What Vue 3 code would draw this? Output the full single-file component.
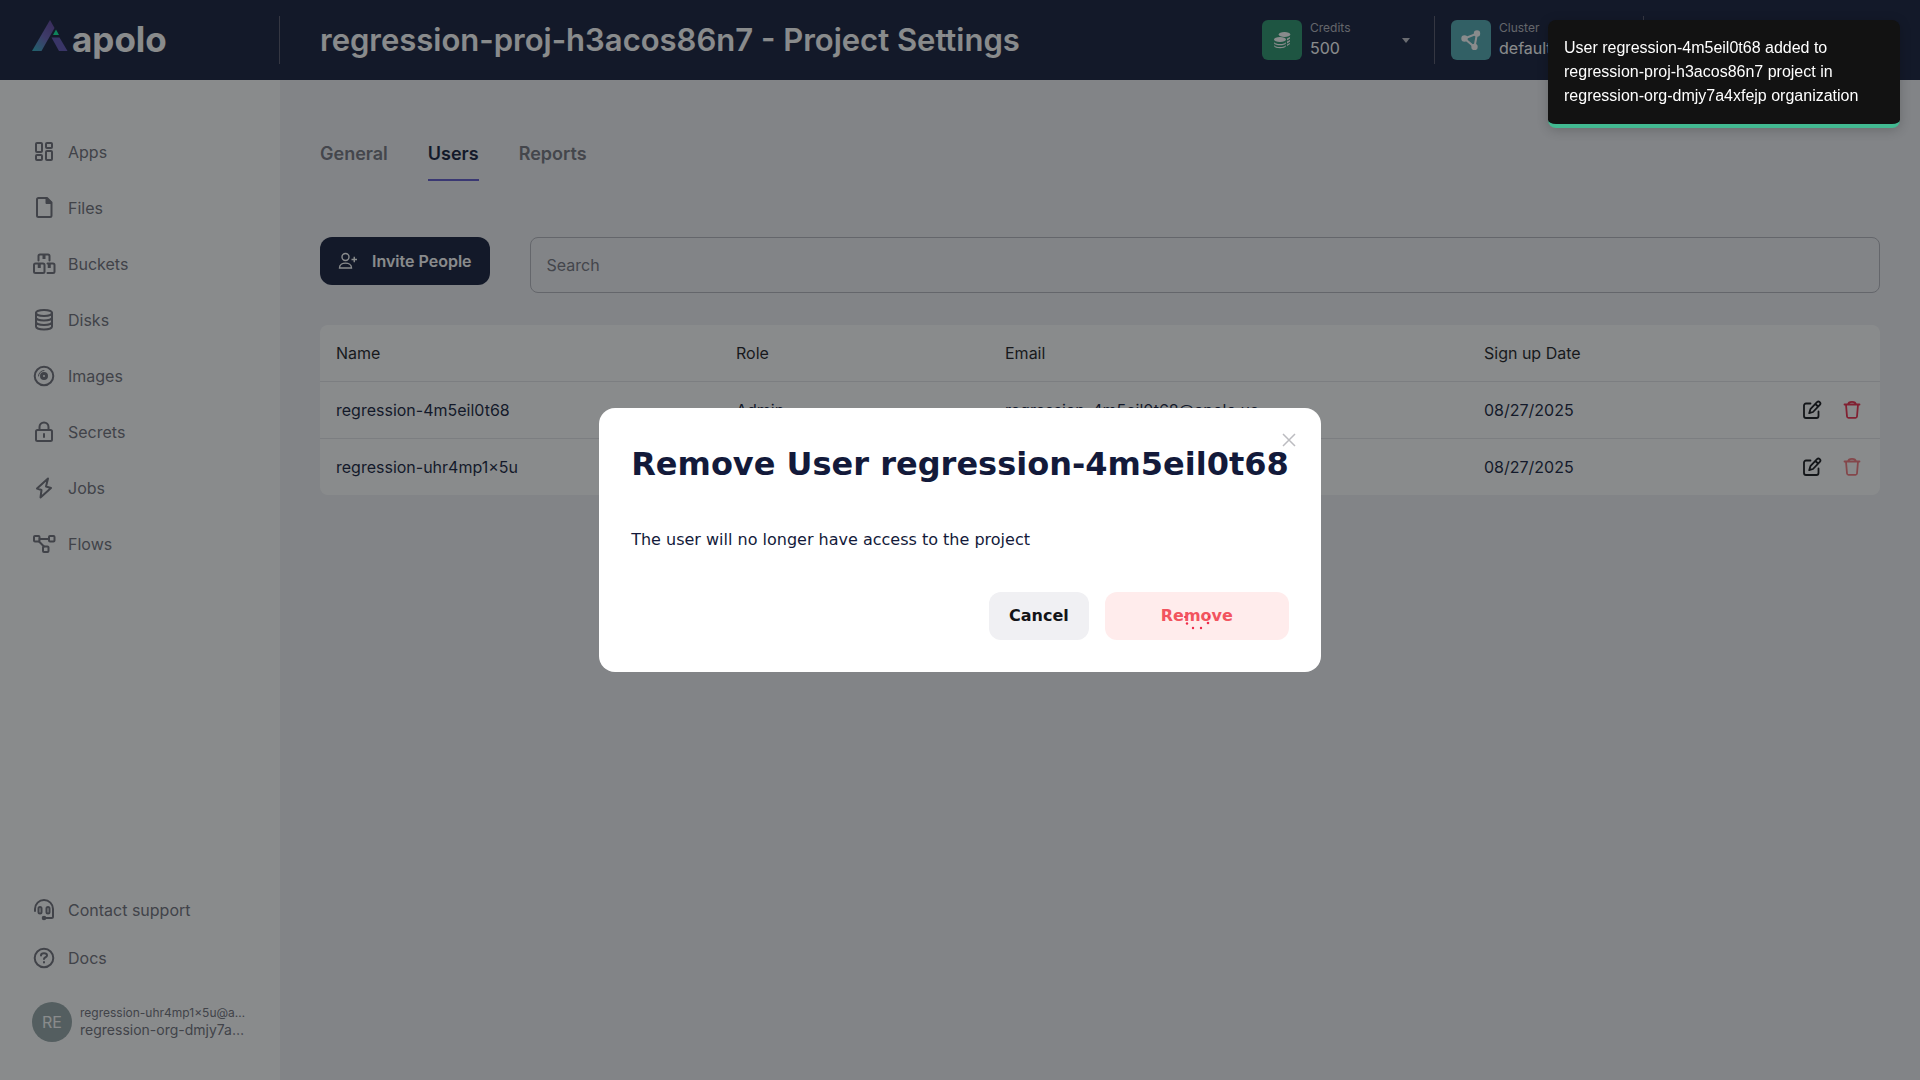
<script setup>
import { ref } from 'vue'

const search = ref('')
const navItems = ['Apps', 'Files', 'Buckets', 'Disks', 'Images', 'Secrets', 'Jobs', 'Flows']
const helpItems = ['Contact support', 'Docs']
const tabs = ['General', 'Users', 'Reports']
const users = [
  { name: 'regression-4m5eil0t68', role: 'Admin', email: 'regression-4m5eil0t68@apolo.us', date: '08/27/2025', locked: false },
  { name: 'regression-uhr4mp1x5u', role: 'Admin', email: 'regression-uhr4mp1x5u@apolo.us', date: '08/27/2025', locked: true },
]
const icons = {
  Apps: '<rect x="4" y="3" width="6" height="9" rx="1"/><rect x="14" y="3" width="6" height="5" rx="1"/><rect x="14" y="11" width="6" height="9" rx="1"/><rect x="4" y="15" width="6" height="5" rx="1"/>',
  Files: '<path d="M6.500 2h8.500l4.500 4.500v13a1.500 1.500 0 0 1-1.500 1.500h-11.500a1.500 1.500 0 0 1-1.500-1.500v-16a1.500 1.500 0 0 1 1.500-1.500z"/><path d="M14.500 2.500v4.500h4.500z" fill="currentColor"/>',
  Buckets: '<path d="M6.500 8.500V4A1.500 1.500 0 0 1 8 2.500h8A1.500 1.500 0 0 1 17.500 4v4.500"/><rect x="2" y="11.500" width="10.500" height="9.500" rx="1.500"/><path d="M15.500 11.500H21a1.500 1.500 0 0 1 1.500 1.500v6.500A1.500 1.500 0 0 1 21 21h-5.500"/><path d="M12 3v4M7.250 12v4M17.250 12v4" stroke-width="3" stroke-linecap="butt"/>',
  Disks: '<ellipse cx="12" cy="5" rx="8" ry="3"/><path d="M4 5v13.500c0 1.700 3.600 3 8 3s8-1.300 8-3V5M4 9.500c0 1.700 3.600 3 8 3s8-1.300 8-3M4 14c0 1.700 3.600 3 8 3s8-1.300 8-3"/>',
  Images: '<circle cx="12" cy="12" r="9.300"/><circle cx="12" cy="12" r="2.500" stroke-width="3"/><path d="M6.500 12A5.500 5.500 0 0 1 12 6.500" stroke-width="1"/>',
  Secrets: '<rect x="4" y="10" width="16" height="11" rx="1.500"/><path d="M7.500 10V7a4.500 4.500 0 0 1 9 0v3M12 14v3"/>',
  Jobs: '<path d="M16 2.500 5 12.500l4.500 1.500L8.500 21.500 19 12l-5-1.500z"/>',
  Flows: '<rect x="2" y="4" width="5.500" height="5.500" rx="1"/><rect x="17" y="4" width="5.500" height="5.500" rx="1"/><rect x="11" y="14.500" width="5.500" height="5.500" rx="1"/><path d="M7.500 7H17M7 9.500l5 5"/>',
  'Contact support': '<path d="M3 13v-2a9 9 0 0 1 18 0v7.500a1.500 1.500 0 0 1-1.500 1.500H13"/><rect x="6.500" y="9" width="3" height="6.500" rx="1.500"/><rect x="14.500" y="9" width="3" height="6.500" rx="1.500"/><circle cx="12" cy="20" r="1.300" fill="currentColor"/>',
  Docs: '<circle cx="12" cy="12" r="9.300"/><path d="M9 9.500c0-3 6-3 6 0 0 2-3 1.500-3 3.500M12 16v.6" stroke-width="2"/>',
}
</script>

<template>
  <div class="page">
    <header class="topbar">
      <a class="brand" href="#" aria-label="apolo">
        <svg class="mark" viewBox="0 0 36 31" aria-hidden="true">
          <defs>
            <linearGradient id="leg" x1="0" y1="1" x2=".7" y2="0">
              <stop offset="0" stop-color="#2bb0c0" /><stop offset=".55" stop-color="#6860b8" /><stop offset="1" stop-color="#5f45a0" />
            </linearGradient>
          </defs>
          <path d="M18 0 22.500 8 9.500 31H0z" fill="url(#leg)" />
          <path d="M19.500 17.500h8L35.500 31H27z" fill="#5f52b4" />
          <path d="M24 9.500 27 15h-6z" fill="#08f09c" />
        </svg>
        <span class="wordmark">apolo</span>
      </a>
      <h1>regression-proj-h3acos86n7 - Project Settings</h1>
      <div class="meters">
        <button class="meter credits" type="button">
          <span class="tile green">
            <svg viewBox="0 0 20 20" fill="currentColor" aria-hidden="true">
              <ellipse cx="12.500" cy="4.500" rx="5.800" ry="2.500" /><ellipse cx="8" cy="9.500" rx="6" ry="2.600" />
              <path d="M2 12c1 2.800 11 2.800 12 0v1.200c-1 2.800-11 2.800-12 0zM2 15c1 2.800 11 2.800 12 0v1c-1 3-11 3-12 0zM15 8.500l3-1.500v1.500l-3 2zM15 11.500l3-1.500v1.500l-3 2zM15 14.500l3-1.500v1l-3 2z" />
            </svg>
          </span>
          <span class="meter-text"><small>Credits</small><span>500</span></span>
          <i class="caret"></i>
        </button>
        <button class="meter cluster" type="button">
          <span class="tile teal">
            <svg viewBox="0 0 20 20" fill="currentColor" stroke="currentColor" stroke-width="2" aria-hidden="true">
              <path d="M3.500 8.500 16 3.500 13.500 17z" fill="none" />
              <circle cx="3.500" cy="8.500" r="2.200" /><circle cx="16" cy="3.500" r="2.200" /><circle cx="13.500" cy="17" r="2.200" />
            </svg>
          </span>
          <span class="meter-text"><small>Cluster</small><span>default</span></span>
          <i class="caret"></i>
        </button>
      </div>
    </header>

    <div class="body">
      <aside class="sidebar">
        <nav class="nav">
          <a v-for="item in navItems" :key="item" href="#">
            <svg class="icon" viewBox="0 0 24 24" aria-hidden="true" v-html="icons[item]"></svg>{{ item }}
          </a>
        </nav>
        <nav class="nav help">
          <a v-for="item in helpItems" :key="item" href="#">
            <svg class="icon" viewBox="0 0 24 24" aria-hidden="true" v-html="icons[item]"></svg>{{ item }}
          </a>
        </nav>
        <div class="account">
          <span class="avatar">RE</span>
          <span class="who">
            <span class="mail">regression-uhr4mp1x5u@apolo.us</span>
            <span class="org">regression-org-dmjy7a4xfejp</span>
          </span>
        </div>
      </aside>

      <main class="content">
        <nav class="tabs">
          <a v-for="tab in tabs" :key="tab" href="#" :class="{ active: tab === 'Users' }">{{ tab }}</a>
        </nav>
        <div class="tools">
          <button class="invite" type="button">
            <svg viewBox="0 0 20 20" aria-hidden="true">
              <circle cx="7.500" cy="6" r="3.500" /><path d="M1.500 17c0-6.500 12-6.500 12 0zM13.500 8.500h5.500M16.250 5.750v5.500" />
            </svg>
            Invite People
          </button>
          <input v-model="search" class="search" type="text" placeholder="Search" aria-label="Search" />
        </div>
        <table class="users">
          <colgroup><col class="c-name" /><col class="c-role" /><col class="c-mail" /><col /><col class="c-act" /></colgroup>
          <thead>
            <tr><th>Name</th><th>Role</th><th>Email</th><th>Sign up Date</th><th></th></tr>
          </thead>
          <tbody>
            <tr v-for="user in users" :key="user.name">
              <td>{{ user.name }}</td><td>{{ user.role }}</td><td>{{ user.email }}</td><td>{{ user.date }}</td>
              <td>
                <div class="actions">
                  <button type="button" aria-label="Edit">
                    <svg viewBox="0 0 20 20" aria-hidden="true">
                      <path d="M8.500 3.500H4A2 2 0 0 0 2 5.500V16a2 2 0 0 0 2 2h10.500a2 2 0 0 0 2-2v-4.500" />
                      <path d="M15 2.200a1.900 1.900 0 0 1 2.800 2.700L11 12l-3.800 1.200L8.400 9.200zM13.500 4l2.500 2.500" />
                    </svg>
                  </button>
                  <button class="bin" type="button" aria-label="Remove" :disabled="user.locked">
                    <svg viewBox="0 0 20 20" aria-hidden="true">
                      <path d="M2.500 4.500h15M4 4.500l1 12a1.500 1.500 0 0 0 1.500 1.300h7a1.500 1.500 0 0 0 1.500-1.300l1-12M6 4.500c.5-3.600 7.500-3.600 8 0" />
                    </svg>
                  </button>
                </div>
              </td>
            </tr>
          </tbody>
        </table>
      </main>
    </div>

    <div class="overlay">
      <section class="dialog" role="dialog" aria-modal="true" aria-labelledby="dialog-title">
        <button class="close" type="button" aria-label="Close">
          <svg viewBox="0 0 14 14" aria-hidden="true"><path d="M1 1l12 12M13 1 1 13" /></svg>
        </button>
        <h2 id="dialog-title">Remove User regression-4m5eil0t68</h2>
        <p>The user will no longer have access to the project</p>
        <div class="choices">
          <button class="cancel" type="button">Cancel</button>
          <button class="remove" type="button">
            Remove
            <svg class="dots" viewBox="0 0 32 32" aria-hidden="true">
              <circle cx="4" cy="17" r="1" /><circle cx="6" cy="23.500" r="1.200" /><circle cx="12" cy="28" r="1.200" />
              <circle cx="20" cy="28" r="1.200" /><circle cx="27" cy="23" r="1.300" /><circle cx="28" cy="17" r="1" />
            </svg>
          </button>
        </div>
      </section>
    </div>

    <div class="toast" role="status">
      User regression-4m5eil0t68 added to regression-proj-h3acos86n7 project in regression-org-dmjy7a4xfejp organization
    </div>
  </div>
</template>

<style>
body { margin: 0; }
</style>

<style scoped>
* { box-sizing: border-box; }
.page { min-height: 100vh; display: flex; flex-direction: column; font: 16px/24px Inter, sans-serif; color: #131b3a; background: #f0f0f4; }
a { color: inherit; text-decoration: none; }
button { font: inherit; color: inherit; border: 0; padding: 0; background: none; cursor: pointer; }
svg { display: block; flex: none; }

.topbar { display: flex; align-items: center; height: 80px; padding-right: 276px; background: #131b39; color: #fff; }
.brand { display: flex; align-items: flex-start; gap: 4px; width: 280px; height: 48px; padding: 4px 0 0 32px; border-right: 1px solid #56566a; }
.mark { width: 36px; height: 31px; }
.wordmark { font-size: 35px; line-height: 38px; font-weight: 700; }
.topbar h1 { flex: 1; margin: 0 0 0 40px; font-size: 31px; line-height: 40px; font-weight: 600; white-space: nowrap; }
.meters { display: flex; }
.meter { display: flex; align-items: center; gap: 8px; height: 48px; padding: 0 24px 0 16px; border-right: 1px solid #56566a; text-align: left; }
.credits { width: 189px; }
.cluster { width: 209px; }
.tile { display: grid; place-items: center; width: 40px; height: 40px; border-radius: 6px; }
.tile svg { width: 20px; height: 20px; }
.green { background: #28936a; }
.teal { background: #50a9b0; }
.meter-text { flex: 1; display: flex; flex-direction: column; line-height: 24px; }
.meter-text small { font-size: 12px; line-height: 16px; color: #b4b4bc; }
.caret { border: 4px solid transparent; border-top: 5px solid #c0c0c8; border-bottom: 0; }

.body { flex: 1; display: flex; }
.sidebar { width: 280px; flex: none; display: flex; flex-direction: column; padding: 60px 32px 38px; background: #fff; color: #6e6e78; }
.nav { display: flex; flex-direction: column; gap: 32px; }
.nav a { display: flex; align-items: center; gap: 12px; }
.help { margin-top: auto; gap: 24px; }
.icon { width: 24px; height: 24px; fill: none; stroke: currentColor; stroke-width: 2; stroke-linejoin: round; stroke-linecap: round; }
.account { display: flex; align-items: center; gap: 8px; margin-top: 32px; }
.avatar { display: grid; place-items: center; flex: none; width: 40px; height: 40px; border-radius: 50%; background: #95a5a6; color: #fff; }
.who { min-width: 0; display: flex; flex-direction: column; }
.who span { overflow: hidden; text-overflow: ellipsis; white-space: nowrap; }
.mail { font-size: 12px; line-height: 16px; }
.org { font-size: 14px; line-height: 18px; }

.content { flex: 1; min-width: 0; padding: 60px 40px; }
.tabs { display: flex; gap: 40px; font-size: 18px; font-weight: 600; color: #74747e; }
.tabs a { padding: 2px 0 13px; line-height: 24px; border-bottom: 2px solid transparent; }
.tabs .active { color: #131b3a; border-color: #6158cc; }
.tools { display: flex; align-items: flex-start; gap: 40px; margin: 56px 0 32px; }
.invite { display: flex; align-items: center; gap: 14px; height: 48px; padding: 0 18px; border-radius: 12px; background: #131b39; color: #fff; font-weight: 600; white-space: nowrap; }
.invite svg { width: 20px; height: 20px; fill: none; stroke: currentColor; stroke-width: 1.4; }
.search { flex: 1; min-width: 0; height: 56px; padding: 0 16px; border: 1px solid #b4b4bc; border-radius: 8px; background: transparent; font: inherit; color: inherit; outline: 0; }
.search::placeholder { color: #74747e; opacity: 1; }

.users { width: 100%; table-layout: fixed; border-collapse: separate; border-spacing: 0; background: #fff; border-radius: 8px; }
.users th, .users td { height: 57px; padding: 0 16px; text-align: left; font-weight: 400; white-space: nowrap; }
.users th { height: 56px; color: #1a1a1e; }
.users td { border-top: 1px solid #e4e4e8; }
.c-name { width: 400px; }
.c-role { width: 269px; }
.c-mail { width: 479px; }
.c-act { width: 120px; }
.actions { display: flex; justify-content: flex-end; gap: 20px; color: #131418; padding-right: 2px; }
.actions svg { width: 20px; height: 20px; fill: none; stroke: currentColor; stroke-width: 1.8; stroke-linecap: round; stroke-linejoin: round; }
.bin { color: #ee2b4a; }
.bin:disabled { color: #f4777c; }

.overlay { position: fixed; inset: 0; display: grid; place-items: center; background: rgba(19, 23, 25, .5); }
.dialog { position: relative; padding: 32px; border-radius: 16px; background: #fff; color: #131a3a; font-family: "DejaVu Sans", sans-serif; }
.dialog h2 { margin: 0 0 40px; font-size: 32px; line-height: 48px; font-weight: 700; white-space: nowrap; }
.dialog p { margin: 0 0 40px; }
.close { position: absolute; top: 24px; right: 24px; padding: 1px; color: #bcbcc0; }
.close svg { width: 14px; height: 14px; stroke: currentColor; stroke-width: 1.5; fill: none; }
.choices { display: flex; justify-content: flex-end; gap: 16px; font-weight: 700; }
.choices button { height: 48px; border-radius: 12px; }
.cancel { padding: 0 20px; background: #f0f0f3; color: #131418; }
.remove { position: relative; width: 184px; background: #ffecec; color: #f2545f; }
.dots { position: absolute; left: 50%; top: 50%; width: 32px; height: 32px; margin: -16px 0 0 -16px; fill: #ee2b4a; }

.toast { position: fixed; top: 20px; right: 20px; width: 352px; padding: 16px; border-radius: 8px; border-bottom: 4px solid #42b991; background: #121212; color: #fff; font-family: "Liberation Sans", sans-serif; box-shadow: 0 2px 12px rgba(0, 0, 0, .2); }
</style>
